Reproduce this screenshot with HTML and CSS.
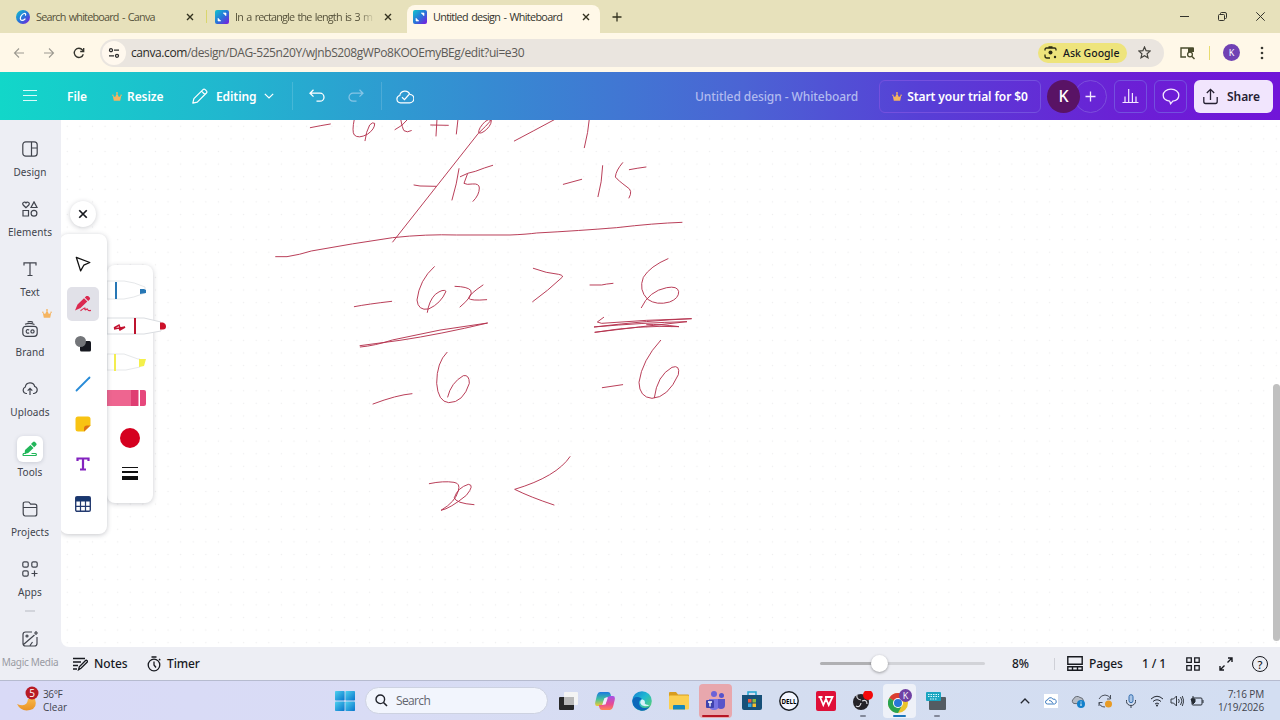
FILE: index.html
```html
<!DOCTYPE html>
<html lang="en">
<head>
    <meta charset="UTF-8">
    <meta name="viewport" content="width=device-width, initial-scale=1.0">
    <title>Untitled design - Whiteboard</title>
    <link rel="stylesheet" href="styles.css">
</head>
<body>
    <svg width="0" height="0" class="defs">
        <defs>
            <linearGradient id="canva" x1="0" y1="0" x2="1" y2="1"><stop offset="0" stop-color="#10c5cd"/><stop offset=".5" stop-color="#2776d8"/><stop offset="1" stop-color="#7d16df"/></linearGradient>
            <linearGradient id="win" x1="0" y1="0" x2="1" y2="1"><stop offset="0" stop-color="#4ed1ef"/><stop offset="1" stop-color="#0875cc"/></linearGradient>
            <linearGradient id="edge" x1="0" y1="0" x2="1" y2="1"><stop offset="0" stop-color="#157bd1"/><stop offset=".45" stop-color="#20b9d3"/><stop offset="1" stop-color="#66d45c"/></linearGradient>
            <linearGradient id="copilotA" x1="0" y1="0" x2="0" y2="1"><stop offset="0" stop-color="#1a78e0"/><stop offset=".5" stop-color="#3fc0a0"/><stop offset="1" stop-color="#f4ca30"/></linearGradient>
            <linearGradient id="copilotB" x1="0" y1="0" x2="0" y2="1"><stop offset="0" stop-color="#a352e8"/><stop offset=".6" stop-color="#e94b91"/><stop offset="1" stop-color="#ff8654"/></linearGradient>
            <linearGradient id="moon" x1="0" y1="0" x2="0" y2="1"><stop offset="0" stop-color="#f8b547"/><stop offset="1" stop-color="#e99225"/></linearGradient>
            <symbol id="board" viewBox="0 0 14 14"><rect width="14" height="14" rx="2" fill="url(#canva)"/><path d="M8.2 3H11v2.8zM3 8.2V11h2.8z" fill="#fff" stroke="#fff" stroke-width=".6"/></symbol>
            <symbol id="x" viewBox="0 0 8 8"><path d="M1 1l6 6M7 1L1 7" stroke="currentColor" stroke-width="1.4" fill="none"/></symbol>
            <symbol id="crown" viewBox="0 0 10 9"><path d="M1.8 8.7L.8 3.8l2.3 1.3L5 1.2l1.9 3.9 2.3-1.3-1 4.9z" fill="#f5b460"/><circle cx=".9" cy="3.2" r=".8" fill="#f5b460"/><circle cx="5" cy="1" r=".9" fill="#f5b460"/><circle cx="9.1" cy="3.2" r=".8" fill="#f5b460"/></symbol>
        </defs>
    </svg>

    <div class="tabs">
        <div class="tab first">
            <svg width="14" height="14" viewBox="0 0 14 14"><circle cx="7" cy="7" r="7" fill="url(#canva)"/><path d="M9.5 5.2c.5-1.2-.1-2-1.3-1.7C6 4 4.2 6.600 4.300 8.700c.1 2.100 2.600 2.300 4.700.3" fill="none" stroke="#fff" stroke-width="1.200" stroke-linecap="round"/></svg>
            <span class="tab-title t1">Search whiteboard - Canva</span>
            <svg class="close" width="8" height="8"><use href="#x"/></svg>
        </div>
        <div class="tab second">
            <svg width="14" height="14"><use href="#board"/></svg>
            <span class="tab-title t2 fade">In a rectangle the length is 3 m</span>
            <svg class="close" width="8" height="8"><use href="#x"/></svg>
        </div>
        <div class="tab active">
            <svg width="14" height="14"><use href="#board"/></svg>
            <span class="tab-title t3">Untitled design - Whiteboard</span>
            <svg class="close" width="8" height="8"><use href="#x"/></svg>
        </div>
        <svg class="new-tab" width="10" height="10" viewBox="0 0 10 10"><path d="M5 .5v9M.5 5h9" stroke="#33321f" stroke-width="1.300"/></svg>
        <div class="window-buttons">
            <svg width="9" height="9" viewBox="0 0 9 9"><path d="M0 4.500h9" stroke="#33332c"/></svg>
            <svg width="9" height="9" viewBox="0 0 9 9" fill="none" stroke="#33332c"><rect x=".5" y="2.500" width="6" height="6" rx="1"/><path d="M2.500 2.500V1.500q0-1 1-1H7q1.500 0 1.500 1.500v3.500q0 1-1 1h-1"/></svg>
            <svg width="9" height="9" viewBox="0 0 9 9"><path d="M.3.3l8.400 8.400M8.700.3L.3 8.700" stroke="#33332c"/></svg>
        </div>
    </div>

    <div class="toolbar">
        <svg class="nav" width="12" height="12" viewBox="0 0 12 12" stroke="#9d9a91" stroke-width="1.100" fill="none"><path d="M11 6H1.500M6 1.500L1.500 6 6 10.500"/></svg>
        <svg class="nav" width="12" height="12" viewBox="0 0 12 12" stroke="#9d9a91" stroke-width="1.100" fill="none"><path d="M1 6h9.500M6 1.500L10.500 6 6 10.500"/></svg>
        <svg class="nav" width="12" height="12" viewBox="0 0 12 12" stroke="#33332c" stroke-width="1.300" fill="none"><path d="M10.300 7.200A4.600 4.600 0 1 1 9.500 3L10.600 4.200"/><path d="M10.700 1v3.500H7.200"/></svg>
        <div class="address">
            <span class="site"><svg width="12" height="12" viewBox="0 0 12 12" fill="none" stroke="#2b2b2b" stroke-width="1.300"><circle cx="3" cy="3.200" r="1.500"/><path d="M6 3.200h5M1 8.800h5"/><circle cx="9" cy="8.800" r="1.500"/></svg></span>
            <span class="url">canva.com<i>/design/DAG-525n20Y/wJnbS208gWPo8KOOEmyBEg/edit?ui=e30</i></span>
            <span class="ask">
                <svg width="13" height="13" viewBox="0 0 13 13" fill="none" stroke="#2b2b14" stroke-width="1.300"><path d="M1 4.500V3.500Q1 2 2.500 2h8Q12 2 12 3.500v1M1 8.500v1.500q0 2 2 2h3M4.500 1h4"/><circle cx="6.500" cy="6.500" r="2" fill="#2b2b14" stroke="none"/><circle cx="11" cy="11" r="1.200" fill="#2b2b14" stroke="none"/></svg>
                <b>Ask Google</b>
            </span>
            <svg class="star" width="13" height="13" viewBox="0 0 13 13"><path d="M6.500 1l1.600 3.700 4 .4-3 2.700.9 4-3.500-2.100L3 11.800l.9-4-3-2.700 4-.4z" fill="none" stroke="#45443e" stroke-width="1.200"/></svg>
        </div>
        <svg class="lens" width="15" height="14" viewBox="0 0 15 14"><path d="M6 11H1V2h12v3" fill="none" stroke="#4a4c2e" stroke-width="1.400"/><path d="M8 2h6v4H8z" fill="#4a4c2e"/><circle cx="10" cy="8.500" r="2.400" fill="#fff8e8" stroke="#4a4c2e" stroke-width="1.300"/><path d="M12 10.500l2.500 2.500" stroke="#4a4c2e" stroke-width="1.400"/></svg>
        <span class="rule"></span>
        <span class="profile">K</span>
        <svg class="dots" width="4" height="14" viewBox="0 0 4 14" fill="#393932"><circle cx="2" cy="2" r="1.300"/><circle cx="2" cy="7" r="1.300"/><circle cx="2" cy="12" r="1.300"/></svg>
    </div>

    <header>
        <svg class="burger" width="14" height="14" viewBox="0 0 14 14"><path d="M0 1.500h14M0 6.500h14M0 11.500h14" stroke="#d9fbfa" stroke-width="1.200"/></svg>
        <span class="file">File</span>
        <svg class="crown" width="10" height="9"><use href="#crown"/></svg>
        <span class="resize">Resize</span>
        <svg class="pencil" width="16" height="16" viewBox="0 0 16 16" fill="none" stroke="#fff" stroke-width="1.200" stroke-linejoin="round"><path d="M.8 15.200l1.100-4.500L11 1.600q1-1 2.200 0l1.200 1.200q1 1.100 0 2.200L5.300 14.100zM9.500 3.200l3.300 3.300"/></svg>
        <span class="editing">Editing</span>
        <svg class="chev" width="10" height="6" viewBox="0 0 10 6"><path d="M.8.8L5 5 9.200.8" fill="none" stroke="#fff" stroke-width="1.200"/></svg>
        <span class="divider"></span>
        <svg class="undo" width="16" height="14" viewBox="0 0 16 14" fill="none" stroke="#fff" stroke-width="1.300"><path d="M4.500.8L1 4.200l3.500 3.400M1 4.200h10a4 4 0 0 1 0 8H7.500"/></svg>
        <svg class="redo" width="16" height="14" viewBox="0 0 16 14" fill="none" stroke="#86c5e6" stroke-width="1.200"><path d="M11.500.8L15 4.200l-3.500 3.400M15 4.200H5a4 4 0 0 0 0 8h3.500"/></svg>
        <span class="divider"></span>
        <svg class="cloud" width="18" height="15" viewBox="0 0 18 15" fill="none" stroke="#fff" stroke-width="1.200"><path d="M4.500 13.800A3.700 3.700 0 0 1 3.800 6.500a5.200 5.200 0 0 1 10-1.100 4.200 4.200 0 0 1-.3 8.400z"/><path d="M6 8.200l2.500 2.400L13 5.500"/></svg>
        <span class="design-name">Untitled design - Whiteboard</span>
        <button class="trial"><svg width="10" height="9"><use href="#crown"/></svg><span>Start your trial for $0</span></button>
        <div class="people"><span class="avatar">K</span><span class="add"><svg width="11" height="11" viewBox="0 0 11 11"><path d="M5.500.5v10M.5 5.500h10" stroke="#f4e9ff" stroke-width="1.300"/></svg></span></div>
        <button class="square"><svg width="17" height="16" viewBox="0 0 17 16" fill="none" stroke="#f3e8ff" stroke-width="1.200"><path d="M.5 14.500h16M3 14V8.500M6.700 14V1M10.400 14V5M14 14V8.500"/></svg></button>
        <button class="square"><svg width="18" height="17" viewBox="0 0 18 17"><path d="M9 1.200c4.700 0 7.800 2.600 7.800 6s-2.600 5.500-6 6L8.600 15.800l-1-2.700C3.700 12.500 1.200 10.500 1.200 7.200s3.100-6 7.800-6z" fill="none" stroke="#f3e8ff" stroke-width="1.300"/></svg></button>
        <button class="share"><svg width="15" height="17" viewBox="0 0 15 17" fill="none" stroke="#252032" stroke-width="1.300"><path d="M.8 9v4.500Q.8 15.500 2.500 15.500h10q1.700 0 1.700-2V9M7.500 12V1.500M3.800 5l3.700-3.700L11.200 5"/></svg><span>Share</span></button>
    </header>

    <main>
        <nav class="side">
            <a><svg viewBox="0 0 16 16"><rect x=".8" y=".8" width="14.400" height="14.400" rx="3"/><path d="M9.500 1v14M9.500 7h5.500"/></svg><span>Design</span></a>
            <a><svg viewBox="0 0 16 16"><path d="M4 6.700L1.200 4C-.3 1.900 2.600-.2 4 1.900 5.400-.2 8.300 1.900 6.800 4zM12 .9l3 5.600H9zM1 9.500h5.500V15H1z"/><circle cx="12" cy="12.200" r="2.900"/></svg><span>Elements</span></a>
            <a><svg viewBox="0 0 16 16"><path d="M2 4.500V1.800h12v2.700M8 2v12.500M5.500 14.500h5"/></svg><span>Text</span></a>
            <a><svg class="badge" width="10" height="9"><use href="#crown"/></svg><svg viewBox="0 0 16 16"><rect x=".8" y="5.300" width="14.400" height="10" rx="3"/><path d="M3 3.200Q8 1.500 12.500 3.500M5.500 1q3-1.200 5.500.5M7.200 9q-2.800-1.200-3 1.300 0 2.500 3 1.600"/><circle cx="10.500" cy="10.400" r="1.600"/></svg><span>Brand</span></a>
            <a class="uploads"><svg viewBox="0 0 16 16"><path d="M5 13.500H4A3.400 3.400 0 0 1 3.300 7 4.800 4.800 0 0 1 12.700 6.500 3.600 3.600 0 0 1 12 13.500h-1M8 15V8.500M5.700 10.700L8 8.300l2.300 2.400"/></svg><span>Uploads</span></a>
            <a class="current"><i><svg viewBox="0 0 16 16"><path d="M3 9l5.500-5 3 3-5.300 5L2.500 13zM9 3l2-2q1-1 2 0l1.200 1.200q1 1 0 2l-2 2z" fill="#22b65a" stroke="none"/><path d="M4 12.500H1.500q-1.200 2 .5 2h12q1-1.500-.5-2h-4" stroke="#22b65a"/></svg></i><span>Tools</span></a>
            <a><svg viewBox="0 0 16 16"><path d="M1.200 12V3q0-2 2-2h3q1 0 1.600 1l.8 1.200h4.200q2 0 2 2V13q0 2-2 2H3.200q-2 0-2-3zM1.500 6.500h13"/></svg><span>Projects</span></a>
            <a><svg viewBox="0 0 16 16"><rect x=".8" y=".8" width="5.400" height="5.400" rx="1.400"/><rect x="9.800" y=".8" width="5.400" height="5.400" rx="1.400"/><rect x=".8" y="9.800" width="5.400" height="5.400" rx="1.400"/><path d="M12.500 9.500v6M9.500 12.500h6"/></svg><span>Apps</span></a>
            <hr>
            <a class="faded"><svg viewBox="0 0 16 16"><path d="M10 1H3.500Q1 1 1 3.500v9Q1 15 3.500 15h9q2.500 0 2.500-2.500V6M1.500 13.500L12.500 4M8 14.500L10.500 11M14 0v4M12 2h4"/><circle cx="5" cy="5" r="1"/></svg><span>Magic Media</span></a>
        </nav>

        <section class="board">
            <svg class="ink" viewBox="61 120 1219 527" width="1219" height="527">
                <g transform="translate(270 115) scale(.33333)">
                    <path d="M121 38Q150 32 181 27M253 12Q245 50 253 60Q265 72 292 58Q315 42 314 25Q308 20 299 30Q288 50 285 77M375 44Q397 34 414 12M392 12Q397 40 402 47Q411 54 424 47M482 30L535 31M501 12L498 63M564 12L559 57M663 12Q668 25 650 43Q633 58 626 53Q625 40 645 20Q656 10 663 16Q650 32 625 55L368 381"/>
                    <path d="M733 78Q790 48 853 14M958 12Q955 50 943 98M432 210L450 213L498 214M567 161Q561 205 546 255M571 185Q595 172 616 169Q644 158 668 151M592 178L582 205Q590 210 607 207Q628 205 628 219Q628 240 609 259M880 208L935 193M998 152Q996 202 984 245M1058 143Q1038 166 1036 186Q1044 196 1071 216Q1090 226 1077 249M1078 164Q1104 159 1128 156"/>
                    <path d="M17 425H51Q90 419 124 408Q250 385 368 368Q470 357 560 360H720Q770 358 800 354Q930 347 1040 338Q1150 325 1236 322"/>
                </g>
                <g transform="translate(340 250) scale(.33333)">
                    <path d="M43 170Q85 162 155 154M283 50Q238 90 231 150Q234 183 266 177Q303 160 318 124Q310 115 286 133Q267 152 262 187M345 109Q383 110 392 121Q402 136 360 171M429 105Q386 134 386 145Q392 153 440 149M580 55Q620 70 656 73Q675 77 663 85Q625 121 578 155M750 105L785 105Q797 102 819 100M984 26Q930 49 910 82Q895 120 923 148Q950 167 989 156Q1017 145 1016 125Q1013 107 980 113Q927 123 904 173"/>
                    <path d="M61 291Q105 287 157 270Q300 236 443 219Q300 253 180 271L60 287M791 202L772 216L785 220Q920 209 1055 206Q930 211 762 231Q910 218 1041 215Q900 230 764 247Q900 225 1017 230Q960 222 920 224"/>
                    <path d="M99 462Q170 435 216 431M321 307Q290 337 290 400Q294 455 326 458Q370 458 388 400Q388 373 370 377Q333 398 323 441M787 413L848 404M962 271Q906 331 897 397Q898 442 936 445Q984 443 1015 374Q1021 343 996 352Q951 377 943 443M268 701Q310 692 342 697Q362 700 355 722Q347 755 303 781Q330 776 379 736Q405 704 385 703Q353 713 343 743Q347 760 402 764M690 620Q650 680 524 718Q570 741 642 765"/>
                </g>
            </svg>

            <span class="close-tools"><svg width="10" height="10" viewBox="0 0 8 8"><use href="#x"/></svg></span>
            <div class="pens">
                <svg width="60" height="140" viewBox="0 0 60 140">
                    <path d="M0 7h17q10 1 21 6v6q-12 5-21 6H0z" fill="#fff" stroke="#e6e8ea"/><path d="M9 8v17" stroke="#2777b5" stroke-width="2"/><path d="M33 15h4l2 1v3l-6 1z" fill="#2777b5"/>
                    <path d="M0 44h37l17 4v9l-17 3H0z" fill="#fff" stroke="#dadde1"/><path d="M28 44v16" stroke="#bd142f" stroke-width="2"/><path d="M7 54l5-3 1 3 5-1-5 3-1-2-5 1" fill="none" stroke="#c3112f" stroke-width="1.500"/><path d="M53 48.500h3q3 1 3 4t-3 3h-3z" fill="#cc1029"/>
                    <path d="M0 80h17l14 5h2v8l-14 3H0z" fill="#fff" stroke="#e6e8ea"/><path d="M8 80v17" stroke="#f3ed50" stroke-width="2"/><path d="M32 85h7l-2 7-5 1z" fill="#f4f04b"/>
                    <path d="M0 116h24v16H0z" fill="#ee6590"/><path d="M24 116h7.500v16h-7.500z" fill="#df3d72"/><path d="M33 116h4q2 0 2 2v12q0 2-2 2h-4z" fill="#e6487c"/>
                </svg>
                <span class="colour"></span>
                <svg class="weight" width="16" height="14" viewBox="0 0 16 14"><path d="M0 1.500h16" stroke="#111"/><path d="M0 6h16" stroke="#111" stroke-width="2"/><path d="M0 12h16" stroke="#111" stroke-width="4"/></svg>
            </div>
            <div class="tools">
                <span><svg viewBox="0 0 16 16"><path d="M1.300 1.300l13.500 5.200-6 2.700-3.200 5.700z" fill="none" stroke="#111" stroke-width="1.300" stroke-linejoin="round"/></svg></span>
                <span class="picked"><svg viewBox="0 0 16 16"><path d="M2.500 8.500L9 2.300l3.300 3.300-6.800 6.300L0 14.500zM9.800 1.500L11.300 0q1-.8 1.800 0l1.600 1.600q.8 1 0 1.800L13.200 4.900z" fill="#db294f"/><path d="M5.500 14.700q5-3.800 4.500-2-.7 2 2 .3.500-.3 1 1 .5 1 3 .4" fill="none" stroke="#db294f" stroke-width="1.200"/></svg></span>
                <span><svg viewBox="0 0 16 16"><rect x="5" y="5" width="11" height="10.500" rx="1.500" fill="#16181f"/><circle cx="5.500" cy="5.500" r="5.500" fill="#737579"/></svg></span>
                <span><svg viewBox="0 0 16 16"><path d="M1.500 14.500l13-13" stroke="#288bd7" stroke-width="1.800" stroke-linecap="round"/></svg></span>
                <span><svg viewBox="0 0 16 16"><path d="M3 .5h10q2.500 0 2.500 2.500v6.500l-6 6H3Q.5 15.500.5 13V3Q.5.5 3 .5z" fill="#f8c313"/><path d="M9 15.500v-3q0-3 3-3h3.500z" fill="#dc7018"/></svg></span>
                <span><svg viewBox="0 0 16 16"><path d="M2.500 5V2.500h11V5M8 2.500v11M5 13.500h6" fill="none" stroke="#8323bf" stroke-width="2.200"/></svg></span>
                <span><svg viewBox="0 0 16 16"><rect x=".7" y=".7" width="14.600" height="14.600" rx="1.300" fill="#fff" stroke="#243b70" stroke-width="1.400"/><path d="M1 1h14v4.500H1z" fill="#18376f"/><path d="M5.500 5v10M10.500 5v10M1 10.300h14" stroke="#243b70" stroke-width="1.200"/></svg></span>
            </div>
            <span class="scrollbar"></span>
        </section>

        <footer>
            <svg class="notes-icon" width="15" height="14" viewBox="0 0 15 14" fill="none" stroke="#17191f" stroke-width="1.300"><path d="M0 1.500h12M0 5h8M0 8.500h5M0 12h4M5.500 12.800l.8-3 6-6q1-1 1.700-.2.900.8 0 1.700l-6 6z"/></svg>
            <span class="notes">Notes</span>
            <svg class="timer-icon" width="14" height="16" viewBox="0 0 14 16" fill="none" stroke="#17191f" stroke-width="1.300"><circle cx="7" cy="9" r="5.800"/><path d="M4.500 1h5M7 5.500V9l2 2.500M12 3l1.300 1.300"/></svg>
            <span class="timer">Timer</span>
            <div class="zoom"><span class="knob"></span></div>
            <span class="percent">8%</span>
            <span class="bar"></span>
            <svg class="pages-icon" width="16" height="15" viewBox="0 0 16 15" fill="none" stroke="#17191f" stroke-width="1.400"><path d="M.8.8h14.400v7.400H.8zM.8 10.700h14.400v3.500H.8zM5.500 10.700v3.500M10.500 10.700v3.500"/></svg>
            <span class="pages">Pages</span>
            <span class="count">1 / 1</span>
            <svg class="grid-icon" width="14" height="14" viewBox="0 0 14 14" fill="none" stroke="#17191f" stroke-width="1.300"><path d="M.8.8h4.500v4.500H.8zM8.700.8h4.500v4.500H8.700zM.8 8.700h4.500v4.500H.8zM8.700 8.700h4.500v4.500H8.700z"/></svg>
            <svg class="expand-icon" width="14" height="14" viewBox="0 0 14 14" fill="none" stroke="#17191f" stroke-width="1.400"><path d="M9 1h4v4M13 1L8.500 5.500M5 13H1V9M1 13l4.500-4.500"/></svg>
            <span class="help">?</span>
        </footer>
    </main>

    <div class="taskbar">
        <svg class="weather-icon" width="24" height="26" viewBox="0 0 24 26"><path d="M0 16q10 4 11-5l7 0q3 9-5 11-9 2-13-6z" fill="url(#moon)"/><circle cx="15" cy="5" r="6.500" fill="#b81b25"/><text x="15" y="8.600" text-anchor="middle" font-size="10" fill="#fff">5</text></svg>
        <div class="weather"><span>36°F</span><span>Clear</span></div>
        <svg class="start" width="20" height="20" viewBox="0 0 20 20" fill="url(#win)"><rect width="9.600" height="9.600" rx=".8"/><rect x="10.400" width="9.600" height="9.600" rx=".8"/><rect y="10.400" width="9.600" height="9.600" rx=".8"/><rect x="10.400" y="10.400" width="9.600" height="9.600" rx=".8"/></svg>
        <div class="search"><svg width="13" height="13" viewBox="0 0 13 13"><circle cx="5.300" cy="5.300" r="4.300" fill="none" stroke="#20222a" stroke-width="1.400"/><path d="M8.500 8.500L12 12" stroke="#20222a" stroke-width="1.600"/></svg><span>Search</span></div>
        <div class="apps">
            <span><svg viewBox="0 0 20 20"><rect x="5" y="1" width="14" height="13" rx="1" fill="#f4f4f4"/><rect x="0" y="6" width="15" height="13" rx="1" fill="#282828"/><path d="M5 6h10v8H5z" fill="#b8b8b8"/></svg></span>
            <span><svg viewBox="0 0 20 20"><path d="M5 1h8q2 0 2.500 2l.7 3H12q-2 0-3 3l-1.200 4q-1 2-3 2H2q-2.500 0-1.700-4L2 4q1-3 3-3z" fill="url(#copilotA)"/><path d="M15 19H7q-2 0-2.500-2l-.7-3H8q2 0 3-3l1.200-4q1-2 3-2H18q2.500 0 1.700 4L18 16q-1 3-3 3z" fill="url(#copilotB)"/><path d="M9.500 7h3.200l-2.200 6.500H7.300z" fill="#f1edfb"/></svg></span>
            <span><svg viewBox="0 0 20 20"><circle cx="10" cy="10" r="9.800" fill="url(#edge)"/><path d="M.3 10Q1 5.500 6 6q3 .5 4 2-3 1-3 4 .5 5 6 5 3 0 5-2Q14.500 20.500 9 19.700 1 18 .3 10z" fill="#0b68ba"/><path d="M10 8.300q-2 1-1.800 3.500.8 3 4.800 3.500 3 0 5-1.500-2 .5-4-.3-2-1-1-2.500 0-2-3-2.700z" fill="#d8f3fa"/></svg></span>
            <span><svg viewBox="0 0 20 20"><path d="M0 2q0-1 1-1h6l2 2.500h10q1 0 1 1V8H0z" fill="#d89d1f"/><rect y="4.500" width="20" height="14" rx="1" fill="#fccf50"/><path d="M4 18.500V15q0-1 1-1h10q1 0 1 1v3.500z" fill="#1689bd"/></svg></span>
            <span class="attention"><svg viewBox="0 0 20 20"><circle cx="8" cy="3" r="3" fill="#6c62d8"/><circle cx="15.500" cy="4.500" r="2.500" fill="#5553cb"/><path d="M3 8h10v6q0 5-5 5-5 0-5-5z" fill="#7774e3"/><path d="M12 8h7v6q0 4-4 4-2 0-3-1z" fill="#5855ca"/><rect y="9" width="8" height="8" rx="1" fill="#3e43ad"/><path d="M2 11h4M4 11v4.500" stroke="#fff" stroke-width="1.300"/></svg></span>
            <span><svg viewBox="0 0 20 20"><path d="M6 5V1h8v4" fill="none" stroke="#20a5d2" stroke-width="1.500"/><path d="M0 4h20v13q0 2-2 2H2q-2 0-2-2z" fill="#175078"/><path d="M6 8h3.500v3.500H6z" fill="#ef593b"/><path d="M10.500 8H14v3.500h-3.500z" fill="#8dbc3c"/><path d="M6 12.500h3.500V16H6z" fill="#36a7df"/><path d="M10.500 12.500H14V16h-3.500z" fill="#f5bf31"/></svg></span>
            <span><svg viewBox="0 0 20 20"><circle cx="10" cy="10" r="9.200" fill="#f4f7ff" stroke="#161a20" stroke-width="1.400"/><text x="10" y="12.500" text-anchor="middle" font-size="6.500" font-weight="700" textLength="15" lengthAdjust="spacingAndGlyphs">DELL</text></svg></span>
            <span><svg viewBox="0 0 20 20"><rect width="20" height="20" rx="2" fill="#df1038"/><path d="M2.500 6h4M4 6l3.300 8L10 8l2.700 6L16.500 6H9" fill="none" stroke="#fff" stroke-width="1.800"/></svg></span>
            <span class="running"><svg viewBox="0 0 20 20"><circle cx="8" cy="11" r="8" fill="#242328"/><path d="M8 9q-5-1-4-5M9 10q5-2 5 3M8 12q-1 5-5 3" fill="none" stroke="#d8d8dc" stroke-width="1.200"/><circle cx="15" cy="4" r="5" fill="#f2090b"/></svg></span>
            <span class="front"><svg viewBox="0 0 24 24"><circle cx="10" cy="14" r="10" fill="#eac42d"/><path d="M10 14L1.300 9A10 10 0 0 1 18.700 9z" fill="#da3c33"/><path d="M1.300 9A10 10 0 0 0 10 24l4-7.700L10 14z" fill="#29a350"/><circle cx="10" cy="14" r="5" fill="#fff"/><circle cx="10" cy="14" r="4" fill="#2877d8"/><circle cx="17.500" cy="6.500" r="6.500" fill="#7041a4"/><text x="17.500" y="9.700" text-anchor="middle" font-size="9" fill="#fff">K</text></svg></span>
            <span class="running"><svg viewBox="0 0 20 20"><rect x="3" y="6" width="17" height="13" rx="1" fill="#535b62"/><rect y="1" width="15" height="9" rx="1" fill="#1ba5c1"/><path d="M2 3.500h11M2 5.500h11M4 8h7" stroke="#d8f8fc" stroke-dasharray="1.500 1"/></svg></span>
        </div>
        <div class="tray">
            <svg width="10" height="6" viewBox="0 0 10 6"><path d="M.8 5.300L5 1l4.200 4.300" fill="none" stroke="#252932" stroke-width="1.300"/></svg>
            <svg width="14" height="14" viewBox="0 0 14 14"><rect width="14" height="14" fill="#fff"/><path d="M3.500 10A2 2 0 0 1 3.500 6 3 3 0 0 1 9 5.200 2.500 2.500 0 0 1 10.500 10zM5 6.500q2.500-.5 4 3" fill="none" stroke="#417ec2"/></svg>
            <svg width="14" height="14" viewBox="0 0 14 14"><path d="M3 9.500A2.500 2.500 0 0 1 2.500 5 4 4 0 0 1 9 3.500q3 0 3.500 3.500v3z" fill="#b5bbc5" stroke="#656b74"/><circle cx="10" cy="10" r="4" fill="#1280cb"/><path d="M10 9.500V12M10 7.500v1" stroke="#fff"/></svg>
            <svg width="14" height="14" viewBox="0 0 14 14"><path d="M1 5Q3 1 7 1q4 0 6 4M12.500 1v4H9M1 12V8.500h3.500M1 8.500Q2 13 7 13" fill="none" stroke="#4b515c"/><circle cx="10.500" cy="10" r="3.500" fill="#e89b25"/></svg>
            <svg width="12" height="14" viewBox="0 0 12 14"><rect x="4" y=".7" width="4" height="8" rx="2" fill="#a9c5e7" stroke="#326dad"/><path d="M1.500 6v1.500a4.500 4 0 0 0 9 0V6M6 11.500V14" fill="none" stroke="#39414d"/></svg>
            <svg width="14" height="12" viewBox="0 0 14 12" fill="none" stroke="#252a33"><path d="M1 4q6-5.500 12 0M3 6.500q4-3.500 8 0M5 9q2-2 4 0"/><circle cx="7" cy="10.500" r="1" fill="#252a33" stroke="none"/></svg>
            <svg width="14" height="12" viewBox="0 0 14 12" fill="none" stroke="#353a43"><path d="M1 4h2.500L6.500 1v10l-3-3H1zM8.500 4q1.500 2 0 4M10.500 2q3 4 0 8M12.300 1q3 5 0 10"/></svg>
            <svg width="14" height="12" viewBox="0 0 14 12" fill="none" stroke="#252a33"><rect x="2" y="3" width="10" height="7" rx="1"/><path d="M13 5v3M3 1v3"/><path d="M1 4h4v3L3 9z" fill="#252a33"/></svg>
        </div>
        <div class="clock"><span>7:16 PM</span><span>1/19/2026</span></div>
    </div>
</body>
</html>
```

FILE: styles.css
```css
* {
    box-sizing: border-box;
}

body {
    margin: 0;
    width: 1280px;
    height: 720px;
    overflow: hidden;
    font-family: "Noto Sans", "Liberation Sans", sans-serif;
    color: #17191f;
    display: flex;
    flex-direction: column;
}

svg {
    display: block;
    flex: none;
}

span {
    white-space: nowrap;
}

.defs {
    position: absolute;
}

/* browser */
.tabs {
    height: 33px;
    flex: none;
    display: flex;
    align-items: center;
    background: #e7e1bb;
    font-family: "Open Sans", sans-serif;
    color: #55513a;
}

.tab {
    display: flex;
    align-items: center;
    height: 28px;
    margin-top: 5px;
    padding-bottom: 5px;
}

.tab-title {
    margin-left: 6px;
    overflow: hidden;
    font-size: 10.8px;
    letter-spacing: -.72px;
    word-spacing: 1.2px;
}

.t1 { width: 144px; letter-spacing: -.78px; }
.t2 { width: 140px; letter-spacing: -.8px; }
.t3 { width: 143px; color: #33332c; letter-spacing: -.68px; }

.close {
    margin-left: 6px;
    color: #33321f;
}

.first {
    width: 206px;
    padding-left: 16px;
}

.second {
    width: 201px;
    padding-left: 9px;
    background: linear-gradient(#d9d66e, #d9d66e) 0 5px / 1px 13px no-repeat;
}

.second .close {
    margin-left: 9px;
}

.fade {
    -webkit-mask-image: linear-gradient(90deg, #000 88%, transparent);
    mask-image: linear-gradient(90deg, #000 88%, transparent);
}

.active {
    width: 193px;
    padding-left: 6px;
    background: #fff8e8;
    border-radius: 8px 8px 0 0;
}

.new-tab {
    margin-left: 12px;
}

.window-buttons {
    margin-left: auto;
    margin-right: 15px;
    display: flex;
    gap: 29px;
}

.toolbar {
    height: 39px;
    flex: none;
    display: flex;
    align-items: center;
    padding-left: 13px;
    background: #fff8e8;
}

.nav {
    margin-right: 18px;
}

.nav:nth-child(3) {
    margin-right: 15px;
}

.address {
    width: 1064px;
    height: 28px;
    border-radius: 14px;
    background: #eae5df;
    display: flex;
    align-items: center;
    padding-left: 2px;
}

.site {
    width: 24px;
    height: 24px;
    border-radius: 50%;
    background: #fff8ee;
    display: grid;
    place-items: center;
}

.url {
    margin-left: 5px;
    font: 12px "Open Sans", sans-serif;
    letter-spacing: -.42px;
    color: #2a2a27;
    flex: 1;
}

.url i {
    font-style: normal;
    color: #5c5a56;
}

.ask {
    width: 89px;
    height: 20px;
    border-radius: 10px;
    background: #eee47c;
    display: flex;
    align-items: center;
    padding-left: 6px;
    margin-right: 11px;
}

.ask b {
    font-size: 10.5px;
    font-weight: 500;
    margin-left: 6px;
}

.star {
    margin-right: 13px;
}

.lens {
    margin-left: 16px;
}

.rule {
    width: 1px;
    height: 14px;
    margin-left: 14px;
    background: #e8dc70;
}

.profile {
    width: 17px;
    height: 17px;
    margin-left: 13px;
    border-radius: 50%;
    background: #7041b4;
    color: #fff;
    font-size: 9px;
    display: grid;
    place-items: center;
}

.dots {
    margin-left: 20px;
}

/* editor header */
header {
    height: 48px;
    flex: none;
    display: flex;
    align-items: center;
    padding-left: 23px;
    padding-right: 7px;
    color: #fff;
    font-size: 12px;
    font-weight: 600;
    background: linear-gradient(90deg, #12d7c9 0, #21b6cf 18%, #368bd2 38%, #4b64d4 58%, #573fd6 72%, #6b20d5 88%, #7115d8 100%);
}

header button {
    height: 33px;
    border: 1px solid #7450de;
    border-radius: 6px;
    background: none;
    color: #fff;
    font: inherit;
    padding: 0;
    display: flex;
    align-items: center;
    justify-content: center;
}

header span {
    letter-spacing: -.08px;
}

.file { margin-left: 30px; width: 20px; }
.crown { margin-left: 25px; }
.resize { margin-left: 5px; width: 37px; }
.pencil { margin-left: 28px; }
.editing { margin-left: 8px; width: 40px; }
.chev { margin-left: 8px; }
.undo { margin-left: 16px; }
.redo { margin-left: 23px; }
.cloud { margin-left: 14px; }

.divider {
    width: 1px;
    height: 28px;
    margin-left: 18px;
    background: rgba(255, 255, 255, .15);
}

.redo + .divider {
    margin-left: 17px;
}

.design-name {
    margin-left: auto;
    width: 164px;
    color: #b2bbef;
    font-weight: 500;
}

.trial {
    width: 162px;
    margin-left: 20px;
    gap: 5px;
}

.people {
    width: 61px;
    margin-left: 6px;
    display: flex;
}

.avatar {
    width: 33px;
    height: 33px;
    border-radius: 50%;
    background: #591365;
    font-size: 16px;
    font-weight: 500;
    display: grid;
    place-items: center;
    z-index: 1;
}

.add {
    width: 33px;
    height: 33px;
    margin-left: -6px;
    border-radius: 50%;
    border: 1px solid #7c4edc;
    display: grid;
    place-items: center;
}

header .square {
    width: 33px;
    margin-left: 7px;
}

.people + .square {
    margin-left: 6px;
}

header .share {
    width: 79px;
    margin-left: 7px;
    background: #f1e5fd;
    border: none;
    color: #252032;
    gap: 9px;
    padding-right: 4px;
}

/* workspace */
main {
    height: 560px;
    flex: none;
    display: grid;
    grid-template-columns: 61px 1219px;
    grid-template-rows: 527px 33px;
    background: #edeef4;
}

.side {
    grid-row: 1 / 3;
    padding-top: 17px;
    font-size: 10px;
    color: #41444d;
    letter-spacing: .1px;
}

.side a {
    height: 60px;
    width: 60px;
    display: flex;
    flex-direction: column;
    align-items: center;
    position: relative;
}

.side a > svg:not(.badge), .side i svg {
    width: 16px;
    height: 16px;
    fill: none;
    stroke: #41444d;
    stroke-width: 1.2;
}

.side a > svg:not(.badge) {
    margin: 4px 0 9px;
}

.side .uploads > svg:not(.badge) {
    margin: 3px 0 10px;
}

.side span {
    line-height: 12px;
}

.side i {
    width: 26px;
    height: 26px;
    margin: -1px 0 4px;
    border-radius: 6px;
    background: #fff;
    box-shadow: 0 1px 4px rgba(60, 65, 90, .2);
    display: grid;
    place-items: center;
}

.badge {
    position: absolute;
    top: -8px;
    left: 42px;
}

.side hr {
    width: 10px;
    height: 2px;
    margin: -7px 0 15px 25px;
    border: 0;
    background: #d2d4db;
}

.side .faded {
    color: #999ba3;
    letter-spacing: -.3px;
}

.board {
    position: relative;
    overflow: hidden;
    border-radius: 0 0 0 8px;
    background: #fff radial-gradient(circle, #eeeeef .7px, transparent 1px) 0 0 / 12.6px 12.6px;
}

.ink path {
    fill: none;
    stroke: #b4304c;
    stroke-width: 2.8;
    stroke-linecap: round;
    stroke-linejoin: round;
}

/* floating drawing controls */
.close-tools {
    position: absolute;
    left: 9px;
    top: 81px;
    width: 26px;
    height: 26px;
    border-radius: 50%;
    background: #fff;
    box-shadow: 0 1px 5px rgba(50, 55, 70, .25);
    display: grid;
    place-items: center;
}

.tools {
    position: absolute;
    left: -1px;
    top: 114px;
    width: 47px;
    height: 300px;
    padding: 13px 7px 7px;
    border-radius: 8px;
    background: #fff;
    box-shadow: 0 1px 5px rgba(50, 55, 70, .28);
    display: flex;
    flex-direction: column;
    gap: 6px;
}

.tools span {
    width: 32px;
    height: 34px;
    border-radius: 5px;
    display: grid;
    place-items: center;
}

.tools svg {
    width: 16px;
    height: 16px;
}

.tools .picked {
    background: #e1e1e8;
}

.pens {
    position: absolute;
    left: 46px;
    top: 145px;
    width: 46px;
    height: 238px;
    padding-top: 9px;
    border-radius: 8px;
    background: #fff;
    box-shadow: 0 1px 5px rgba(50, 55, 70, .25);
}

.colour {
    display: block;
    width: 20px;
    height: 20px;
    margin: 14px 0 0 13px;
    border-radius: 50%;
    background: #d5001f;
}

.weight {
    margin: 18px 0 0 15px;
}

.scrollbar {
    position: absolute;
    right: 0;
    top: 264px;
    width: 7px;
    height: 257px;
    border-radius: 4px;
    background: #c0c0c0;
}

/* editor footer */
footer {
    display: flex;
    align-items: center;
    padding-left: 12px;
    font-size: 12px;
    font-weight: 500;
    letter-spacing: -.1px;
}

.notes { margin-left: 6px; width: 33px; }
.timer-icon { margin-left: 20px; }
.timer { margin-left: 6px; width: 33px; }

.zoom {
    width: 165px;
    height: 3px;
    margin-left: 620px;
    border-radius: 2px;
    background: linear-gradient(90deg, #b0b0b3 36%, #d2d3d8 36%);
    display: flex;
    align-items: center;
    padding-left: 51px;
}

.knob {
    width: 17px;
    height: 17px;
    border-radius: 50%;
    background: #fff;
    box-shadow: 0 1px 3px rgba(0, 0, 0, .35);
}

.percent { margin-left: 27px; width: 18px; }
.bar { margin-left: 24px; width: 1px; height: 12px; background: #cfd0d7; }
.pages-icon { margin-left: 12px; }
.pages { margin-left: 6px; width: 34px; }
.count { margin-left: 19px; width: 26px; }
.grid-icon { margin-left: 18px; }
.expand-icon { margin-left: 19px; }

.help {
    width: 16px;
    height: 16px;
    margin-left: 19px;
    border: 1.3px solid #17191f;
    border-radius: 50%;
    font-size: 11px;
    display: grid;
    place-items: center;
}

/* taskbar */
.taskbar {
    height: 40px;
    flex: none;
    border-top: 1px solid #b6bbcf;
    background: linear-gradient(90deg, #d9daf7, #d9dcf5 30%, #d4ddf0 60%, #d3def2);
    display: flex;
    align-items: center;
    padding-left: 17px;
    font: 11px "Open Sans", sans-serif;
    color: #41444d;
}

.weather-icon {
    overflow: visible;
}

.weather {
    width: 276px;
    margin-left: 2px;
    display: flex;
    flex-direction: column;
    font-size: 10px;
    line-height: 13px;
}

.weather span:first-child {
    letter-spacing: -.4px;
}

.start {
    margin-left: 16px;
}

.search {
    width: 183px;
    height: 27px;
    margin-left: 10px;
    border: 1px solid #cdd2e1;
    border-radius: 14px;
    background: #f2f5fd;
    display: flex;
    align-items: center;
    padding-left: 9px;
    gap: 8px;
    font-size: 12px;
    color: #62656e;
}

.search span {
    letter-spacing: -.65px;
}

.apps {
    margin-left: 4px;
    display: flex;
    gap: 3.8px;
}

.apps span {
    width: 33px;
    height: 34px;
    border-radius: 4px;
    display: grid;
    place-items: center;
    position: relative;
}

.apps svg {
    width: 20px;
    height: 20px;
}

.apps .front svg {
    width: 24px;
    height: 24px;
}

.apps .attention {
    background: #e8a7ad;
}

.apps .front {
    background: #eef1f8;
}

.running::after, .attention::after, .front::after {
    content: "";
    position: absolute;
    bottom: 1px;
    left: 14px;
    width: 6px;
    height: 2px;
    border-radius: 1px;
    background: #83899a;
}

.attention::after {
    left: 3px;
    width: 27px;
    background: #b71524;
}

.front::after {
    left: 10px;
    width: 13px;
    background: #1c75bb;
}

.tray {
    margin-left: auto;
    margin-right: 10px;
    display: flex;
    align-items: center;
    gap: 13px;
}

.tray svg:first-child {
    margin-right: 1px;
}

.tray svg:nth-child(n+7) {
    margin-left: -7px;
}

.clock {
    width: 50px;
    margin-right: 16px;
    display: flex;
    flex-direction: column;
    align-items: flex-end;
    font-size: 10px;
    line-height: 13px;
    letter-spacing: -.15px;
}
```
